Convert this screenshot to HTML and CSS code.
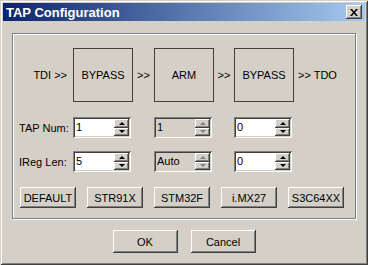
FILE: index.html
```html
<!DOCTYPE html>
<html lang="en">
<head>
  <meta charset="UTF-8" />
  <title>TAP Configuration</title>
  <link rel="stylesheet" href="styles.css">
</head>
<body>
  <div class="window">
    <div class="titlebar">
      <span class="title">TAP Configuration</span>
      <span class="close">
        <svg width="8" height="7" viewBox="0 0 8 7"><path d="M0 0h2l2 2.5L6 0h2L5 3.5 8 7H6L4 4.5 2 7H0l3-3.5z" fill="#000"/></svg>
      </span>
    </div>

    <div class="group">
      <div class="row chain">
        <div class="lbl right">TDI &gt;&gt;</div>
        <div class="tap">BYPASS</div>
        <div class="arrow">&gt;&gt;</div>
        <div class="tap">ARM</div>
        <div class="arrow">&gt;&gt;</div>
        <div class="tap">BYPASS</div>
        <div class="lbl end">&gt;&gt; TDO</div>
      </div>

      <div class="row param">
        <div class="lbl">TAP Num:</div>
        <div class="spin"><span class="spin-val">1</span><span class="spin-btns"><span class="up"></span><span class="down"></span></span></div>
        <div></div>
        <div class="spin off"><span class="spin-val">1</span><span class="spin-btns"><span class="up"></span><span class="down"></span></span></div>
        <div></div>
        <div class="spin"><span class="spin-val">0</span><span class="spin-btns"><span class="up"></span><span class="down"></span></span></div>
      </div>

      <div class="row param second">
        <div class="lbl">IReg Len:</div>
        <div class="spin"><span class="spin-val">5</span><span class="spin-btns"><span class="up"></span><span class="down"></span></span></div>
        <div></div>
        <div class="spin off"><span class="spin-val">Auto</span><span class="spin-btns"><span class="up"></span><span class="down"></span></span></div>
        <div></div>
        <div class="spin"><span class="spin-val">0</span><span class="spin-btns"><span class="up"></span><span class="down"></span></span></div>
      </div>

      <div class="presets">
        <button class="btn">DEFAULT</button>
        <button class="btn">STR91X</button>
        <button class="btn">STM32F</button>
        <button class="btn">i.MX27</button>
        <button class="btn">S3C64XX</button>
      </div>
    </div>

    <div class="actions">
      <button class="btn big">OK</button>
      <button class="btn big">Cancel</button>
    </div>
  </div>
</body>
</html>
```

FILE: styles.css
```css
body {
  margin: 0;
  font-family: "Liberation Sans", Arial, sans-serif;
  font-size: 11px;
  color: #000;
}
.window {
  width: 368px;
  height: 265px;
  box-sizing: border-box;
  padding: 3px;
  background-color: #d4d0c8;
  box-shadow: inset 1px 1px #d4d0c8, inset -1px -1px #404040, inset 2px 2px #fff, inset -2px -2px #808080;
}
.titlebar {
  height: 18px;
  display: flex;
  align-items: center;
  justify-content: space-between;
  padding: 0 3px 0 3px;
  background: linear-gradient(to right, #0a246a, #a6caf0);
}
.title {
  color: white;
  font-weight: bold;
  font-size: 13px;
}
.close {
  width: 16px;
  height: 14px;
  display: flex;
  align-items: center;
  justify-content: center;
  background-color: #d4d0c8;
  box-shadow: inset -1px -1px #404040, inset 1px 1px #fff, inset -2px -2px #808080;
}
.group {
  margin: 12px 9px 0;
  height: 186px;
  box-sizing: border-box;
  border: 1px solid #808080;
  box-shadow: inset 1px 1px #fff, 1px 1px #fff;
  padding-top: 14px;
}
.row {
  display: grid;
  grid-template-columns: 60px 60px 21px 60px 20px 60px 1fr;
  align-items: center;
}
.chain {
  height: 54px;
}
.param {
  height: 21px;
  margin-top: 15px;
}
.param.second {
  margin-top: 13px;
}
.lbl {
  padding-left: 6px;
}
.lbl.right {
  text-align: right;
  padding: 0 6px 0 0;
}
.lbl.end {
  padding-left: 4px;
}
.tap {
  height: 54px;
  box-sizing: border-box;
  border: 1px solid #404040;
  display: flex;
  align-items: center;
  justify-content: center;
}
.arrow {
  text-align: center;
}
.spin {
  width: 58px;
  height: 21px;
  box-sizing: border-box;
  display: flex;
  align-items: stretch;
  padding: 2px;
  background-color: white;
  box-shadow: inset 1px 1px #808080, inset -1px -1px #fff, inset 2px 2px #404040, inset -2px -2px #d4d0c8;
}
.spin.off {
  background-color: #d4d0c8;
}
.spin-val {
  flex: 1;
  padding-left: 1px;
  line-height: 17px;
}
.spin-btns {
  width: 15px;
  display: flex;
  flex-direction: column;
}
.up, .down {
  flex: 1;
  display: flex;
  align-items: center;
  justify-content: center;
  background-color: #d4d0c8;
  box-shadow: inset -1px -1px #404040, inset 1px 1px #fff, inset -2px -2px #808080;
}
.up::after, .down::after {
  content: "";
  border-left: 3px solid transparent;
  border-right: 3px solid transparent;
}
.up::after {
  border-bottom: 3px solid #000;
}
.down::after {
  border-top: 3px solid #000;
}
.off .up::after {
  border-bottom-color: #808080;
}
.off .down::after {
  border-top-color: #808080;
}
.presets {
  display: grid;
  grid-template-columns: repeat(5, 56px);
  column-gap: 11px;
  margin-top: 15px;
  padding-left: 7px;
}
.btn {
  height: 21px;
  padding: 0;
  border: none;
  font-family: "Liberation Sans", Arial, sans-serif;
  font-size: 11px;
  color: #000;
  background-color: #d4d0c8;
  box-shadow: inset -1px -1px #404040, inset 1px 1px #fff, inset -2px -2px #808080;
}
.actions {
  display: flex;
  justify-content: center;
  gap: 13px;
  margin-top: 11px;
}
.btn.big {
  width: 65px;
  height: 23px;
}
```
